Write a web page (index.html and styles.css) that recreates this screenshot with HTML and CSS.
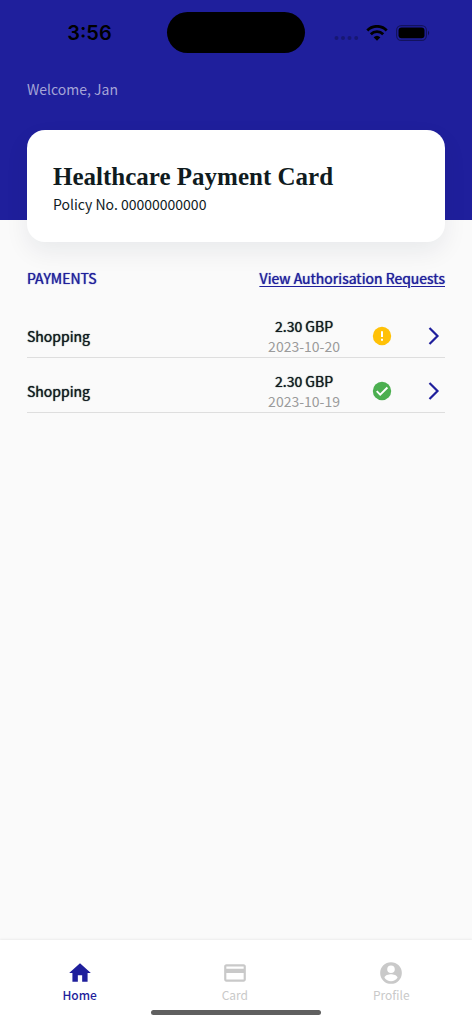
FILE: index.html
```html
<!DOCTYPE html>
<html lang="en">
<head>
<meta charset="utf-8">
<meta name="viewport" content="width=device-width, initial-scale=1">
<title>Healthcare Payment Card</title>
<link rel="stylesheet" href="styles.css">
</head>
<body>
<div class="app">
  <header class="header">
    <div class="status">
      <span class="clock">3:56</span>
      <span class="island"></span>
      <span class="signals">
        <svg class="dots" viewBox="0 0 25 6" aria-hidden="true"><circle cx="2.5" cy="3" r="2"/><circle cx="9" cy="3" r="2"/><circle cx="15.5" cy="3" r="2"/><circle cx="22.2" cy="3" r="2"/></svg>
        <svg class="wifi" viewBox="0 0 22 16" aria-hidden="true"><path d="M1.3 5.4a13.6 13.6 0 0 1 19.4 0M4.8 9.2a8.700 8.700 0 0 1 12.400 0" fill="none" stroke="#000" stroke-width="2.800"/><path d="M7.600 12.300a5 5 0 0 1 6.800 0L11 15.800z"/></svg>
        <svg class="battery" viewBox="0 0 35 16" aria-hidden="true"><rect x=".6" y=".6" width="29.8" height="14.8" rx="4.6" fill="none" stroke="#000" stroke-opacity=".4" stroke-width="1.2"/><rect x="2.5" y="2.6" width="26" height="10.6" rx="3"/><path d="M32 5.600q2.400 2.400 0 4.800z" fill-opacity=".5"/></svg>
      </span>
    </div>
    <p class="welcome">Welcome, Jan</p>
  </header>
  <main class="content">
    <section class="card">
      <h1 class="card-title">Healthcare Payment Card</h1>
      <p class="policy">Policy No. 00000000000</p>
    </section>
    <div class="section-head">
      <h2 class="section-title">PAYMENTS</h2>
      <a class="requests" href="#requests">View Authorisation Requests</a>
    </div>
    <ul class="payments">
      <li class="payment">
        <span class="name">Shopping</span>
        <span class="sum"><span class="amount">2.30 GBP</span><time class="date" datetime="2023-10-20">2023-10-20</time></span>
        <svg class="state" viewBox="0 0 20 20" role="img" aria-label="Pending"><circle cx="10" cy="10" r="9.2" fill="#ffc107"/><path d="M9 5.3h2v5.6H9zM9 12.7h2v2H9z" fill="#fff"/></svg>
        <button class="open" type="button" aria-label="Open payment of 20 October"><svg class="chevron" viewBox="0 0 12 20" aria-hidden="true"><path d="M1.5 2 9.5 10l-8 8"/></svg></button>
      </li>
      <li class="payment">
        <span class="name">Shopping</span>
        <span class="sum"><span class="amount">2.30 GBP</span><time class="date" datetime="2023-10-19">2023-10-19</time></span>
        <svg class="state" viewBox="0 0 20 20" role="img" aria-label="Approved"><circle cx="10" cy="10" r="9.2" fill="#4caf50"/><path d="m4.7 10.2 3.5 3.5 7.2-7.2" fill="none" stroke="#fff" stroke-width="1.9"/></svg>
        <button class="open" type="button" aria-label="Open payment of 19 October"><svg class="chevron" viewBox="0 0 12 20" aria-hidden="true"><path d="M1.5 2 9.5 10l-8 8"/></svg></button>
      </li>
    </ul>
  </main>
  <nav class="tabs">
    <div class="tab-row">
      <a class="tab tab-active" href="#home" aria-current="page"><svg class="tab-icon" viewBox="0 0 24 24" aria-hidden="true"><path d="M10 20v-6h4v6h5v-8h3L12 3 2 12h3v8z"/></svg>Home</a>
      <a class="tab" href="#card"><svg class="tab-icon" viewBox="0 0 24 24" aria-hidden="true"><path d="M20 4H4c-1.110 0-2 .89-2 2v12c0 1.110.89 2 2 2h16c1.110 0 2-.89 2-2V6c0-1.110-.89-2-2-2zm0 14H4v-6h16zm0-10H4V6h16z"/></svg>Card</a>
      <a class="tab" href="#profile"><svg class="tab-icon" viewBox="0 0 24 24" aria-hidden="true"><path d="M12 2a10 10 0 1 0 0 20 10 10 0 0 0 0-20zm0 3a3.500 3.500 0 1 1 0 7 3.500 3.500 0 0 1 0-7zm0 14.500a7.200 7.200 0 0 1-6-3.220c.03-1.990 4-3.080 6-3.080s5.970 1.090 6 3.080a7.200 7.200 0 0 1-6 3.220z"/></svg>Profile</a>
    </div>
    <span class="home-bar"></span>
  </nav>
</div>
</body>
</html>
```
FILE: styles.css
```css
* { box-sizing: border-box; }

body {
  margin: 0;
  background: #fafafa;
  color: #101b1e;
  font: 14px/20px "Noto Sans CJK SC", "Open Sans", sans-serif;
}

h1, h2, p, ul { margin: 0; padding: 0; }

.app { display: flex; flex-direction: column; min-height: 100vh; }

.header { background: #1f1f9c; padding-bottom: 121px; }

.status {
  display: grid;
  grid-template-columns: 1fr 138px 1fr;
  align-items: center;
  padding-top: 12px;
}
.clock {
  padding-left: 12px;
  color: #000;
  font: 600 20px/24px Inter, sans-serif;
  text-align: center;
}
.island { height: 41px; border-radius: 21px; background: #000; }
.signals { display: flex; align-items: center; padding-left: 29px; }
.dots { width: 25px; height: 6px; margin-top: 10px; opacity: .25; }
.wifi { width: 22px; height: 16px; margin-left: 7px; }
.battery { width: 35px; height: 16px; margin-left: 8px; }

.welcome { padding: 26px 27px 0; color: #a5a5d7; }

.content { flex: 1; padding: 0 27px; }

.card {
  margin-top: -90px;
  padding: 31px 26px 27px;
  border-radius: 18px;
  background: #fff;
  box-shadow: 0 10px 24px rgba(16, 30, 60, .07);
}
.card-title { font: bold 25px/32px "Liberation Serif", serif; }
.policy { line-height: 22px; }

.section-head {
  display: flex;
  justify-content: space-between;
  padding: 26px 0 15px;
  color: #1f1f9c;
}
.section-title, .requests, .name, .amount {
  font-size: 14px;
  font-weight: 400;
  text-shadow: 0 0 1px currentColor;
}
.requests { color: inherit; text-underline-offset: 2px; text-decoration-thickness: 1px; }

.payments { list-style: none; }
.payment {
  display: flex;
  align-items: center;
  padding: 13px 0 1px;
  border-bottom: 1px solid #dedede;
}
.name { flex: 1; }
.sum { display: flex; flex-direction: column; align-items: center; }
.date { color: #9a9b9b; }
.state { width: 20px; height: 20px; margin-left: 32px; }
.open {
  display: flex;
  margin-left: 36px;
  padding: 0 5px 0 0;
  border: 0;
  background: none;
}
.chevron { width: 12px; height: 20px; fill: none; stroke: #1f1f9c; stroke-width: 2.2; }

.tabs {
  padding: 20px 0 9px;
  background: #fff;
  box-shadow: 0 -1px 2px rgba(0, 0, 0, .06);
}
.tab-row { display: flex; justify-content: space-around; }
.tab {
  display: flex;
  flex-direction: column;
  align-items: center;
  color: #c9c9c9;
  font-size: 12px;
  line-height: 18px;
  text-decoration: none;
}
.tab-active { color: #1f1f9c; font-weight: 500; }
.tab-icon { width: 26px; height: 26px; fill: currentColor; }
.home-bar {
  display: block;
  width: 36%;
  height: 5px;
  margin: 6px auto 0;
  border-radius: 3px;
  background: #606060;
}
```
